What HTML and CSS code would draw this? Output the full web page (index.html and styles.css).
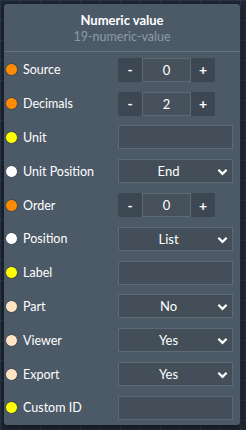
FILE: index.html
```html
<!DOCTYPE html>
<html lang="en">
<head>
  <meta charset="UTF-8" />
  <title>Numeric value</title>
  <link rel="stylesheet" href="styles.css">
</head>
<body>
  <div class="panel">
    <div class="panel-head">
      <div class="title">Numeric value</div>
      <div class="subtitle">19-numeric-value</div>
    </div>

    <div class="row">
      <span class="dot orange"></span><span class="label">Source</span>
      <div class="stepper"><button class="step">-</button><input class="num" value="0"><button class="step">+</button></div>
    </div>
    <div class="row">
      <span class="dot orange"></span><span class="label">Decimals</span>
      <div class="stepper"><button class="step">-</button><input class="num" value="2"><button class="step">+</button></div>
    </div>
    <div class="row">
      <span class="dot yellow"></span><span class="label">Unit</span>
      <input class="text">
    </div>
    <div class="row">
      <span class="dot white"></span><span class="label">Unit Position</span>
      <div class="select">End<svg class="chev" viewBox="0 0 12 8"><path d="M1.5 1.5 6 6l4.5-4.5"/></svg></div>
    </div>
    <div class="row">
      <span class="dot orange"></span><span class="label">Order</span>
      <div class="stepper"><button class="step">-</button><input class="num" value="0"><button class="step">+</button></div>
    </div>
    <div class="row">
      <span class="dot white"></span><span class="label">Position</span>
      <div class="select">List<svg class="chev" viewBox="0 0 12 8"><path d="M1.5 1.5 6 6l4.5-4.5"/></svg></div>
    </div>
    <div class="row">
      <span class="dot yellow"></span><span class="label">Label</span>
      <input class="text">
    </div>
    <div class="row">
      <span class="dot peach"></span><span class="label">Part</span>
      <div class="select">No<svg class="chev" viewBox="0 0 12 8"><path d="M1.5 1.5 6 6l4.5-4.5"/></svg></div>
    </div>
    <div class="row">
      <span class="dot peach"></span><span class="label">Viewer</span>
      <div class="select">Yes<svg class="chev" viewBox="0 0 12 8"><path d="M1.5 1.5 6 6l4.5-4.5"/></svg></div>
    </div>
    <div class="row">
      <span class="dot peach"></span><span class="label">Export</span>
      <div class="select">Yes<svg class="chev" viewBox="0 0 12 8"><path d="M1.5 1.5 6 6l4.5-4.5"/></svg></div>
    </div>
    <div class="row">
      <span class="dot yellow"></span><span class="label">Custom ID</span>
      <input class="text">
    </div>
  </div>
</body>
</html>
```
FILE: styles.css
```css
body {
  margin: 0;
  height: 430px;
  overflow: hidden;
  font-family: 'Lato', 'Open Sans', sans-serif;
  background-color: #1f2733;
  background-image:
    linear-gradient(rgba(60, 80, 100, 0.35) 1px, transparent 1px),
    linear-gradient(90deg, rgba(60, 80, 100, 0.35) 1px, transparent 1px);
  background-size: 20px 20px;
}

.panel {
  margin: 4px 0 0 4px;
  width: 236px;
  height: 421px;
  background-color: #4c5967;
  border-radius: 3px;
  box-shadow: 0 2px 6px rgba(0, 0, 0, 0.5);
  color: #ffffff;
}

.panel-head {
  height: 46px;
  padding-top: 1px;
  border-bottom: 1px solid #66737f;
  text-align: center;
  margin-bottom: 1px;
}

.title {
  font-size: 13px;
  font-weight: bold;
  line-height: 16px;
  padding-top: 7px;
}

.subtitle {
  font-size: 12.5px;
  line-height: 17px;
  color: #8d9ba7;
}

.row {
  display: flex;
  align-items: center;
  height: 33.8px;
  padding-right: 7px;
}

.dot {
  width: 11px;
  height: 11px;
  border-radius: 50%;
  margin: 0 5px 0 1px;
  border: 1px solid #3a4450;
  flex-shrink: 0;
}

.orange { background-color: #ff8c00; }
.yellow { background-color: #ffff00; }
.white { background-color: #ffffff; }
.peach { background-color: #ffe4c4; }

.label {
  font-size: 12.5px;
  flex: 1;
}

.stepper {
  display: flex;
  width: 115px;
  height: 24px;
}

.step {
  width: 24px;
  height: 24px;
  border: none;
  padding: 0;
  background-color: #3d4751;
  color: #ffffff;
  font-family: inherit;
  font-size: 14px;
  font-weight: bold;
}

.step:first-child { border-radius: 2px 0 0 2px; }
.step:last-child { border-radius: 0 2px 2px 0; }

.num {
  width: 49px;
  height: 24px;
  box-sizing: border-box;
  border: 1px solid #5c6a77;
  background-color: #46515c;
  color: #ffffff;
  font-family: inherit;
  font-size: 13px;
  text-align: center;
  padding: 0;
}

.text {
  width: 115px;
  height: 24px;
  box-sizing: border-box;
  border: 1px solid #5c6a77;
  background-color: #434e59;
  padding: 0;
}

.select {
  position: relative;
  width: 115px;
  height: 24px;
  box-sizing: border-box;
  border: 1px solid #5c6a77;
  background-color: #434e59;
  font-size: 13px;
  line-height: 22px;
  text-align: center;
  padding-right: 14px;
}

.chev {
  position: absolute;
  right: 4px;
  top: 8px;
  width: 11px;
  height: 8px;
  fill: none;
  stroke: #ffffff;
  stroke-width: 2.4;
}
```
